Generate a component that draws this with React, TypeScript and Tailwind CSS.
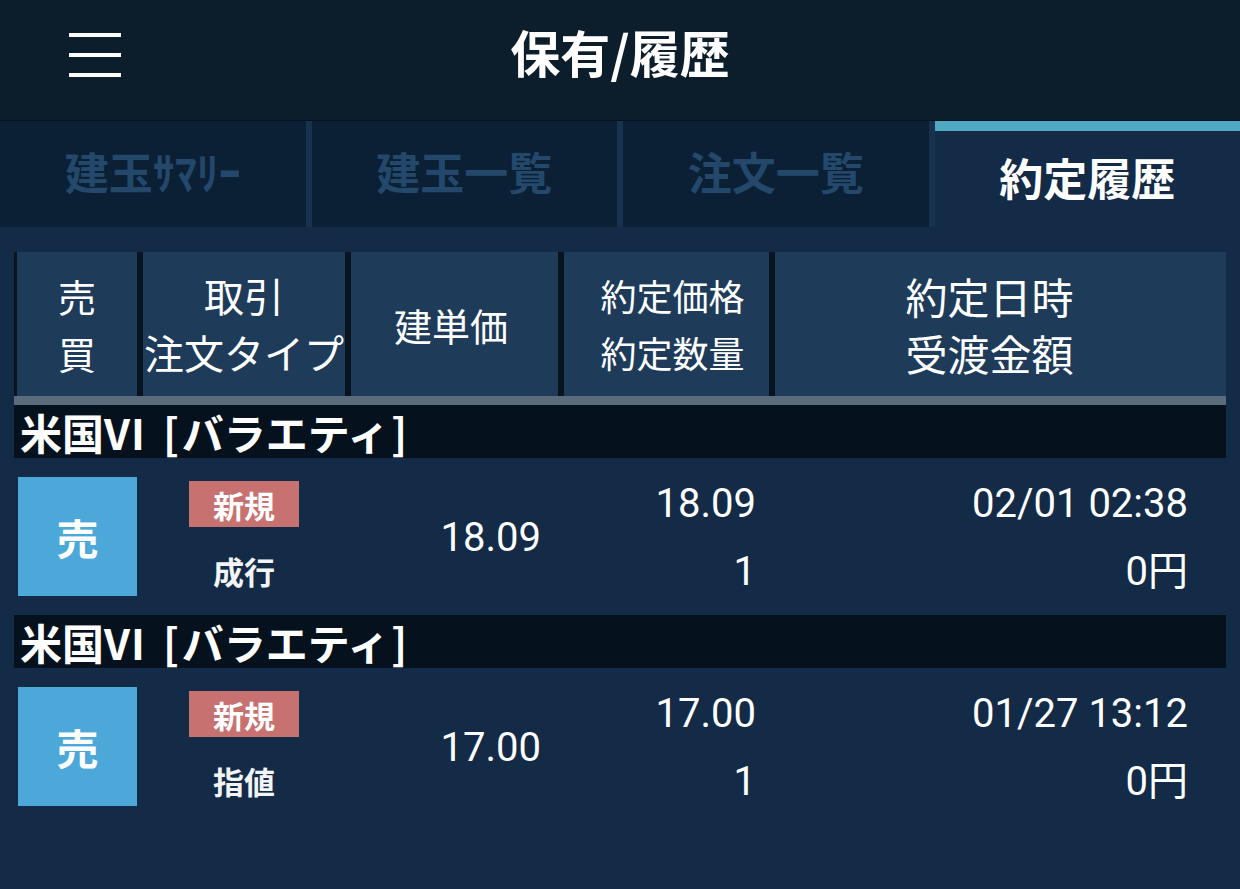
import React from "react";

const CJK = "font-['Noto_Sans_CJK_JP',sans-serif]";
const NUM = "font-['Roboto','Noto_Sans_CJK_JP',sans-serif]";

function Tab({ label, active }: { label: string; active?: boolean }) {
  if (active) {
    return (
      <div className="flex-1 flex flex-col bg-[#132b46]">
        <div className="h-[10px] bg-[#4fa9c2]" />
        <div className="flex-1 flex items-center justify-center pb-[4px] text-[44px] font-bold text-white leading-none">
          {label}
        </div>
      </div>
    );
  }
  return (
    <div className="flex-1 flex items-center justify-center pb-[6px] bg-[#0b2034] text-[44px] font-bold text-[#23486c] leading-none">
      {label}
    </div>
  );
}

function HeadCell({ lines, w, size, pad }: { lines: string[]; w: string; size: string; pad?: string }) {
  return (
    <div className={`${w} ${pad ?? ""} bg-[#1e3c5a] flex flex-col items-center justify-center text-white font-normal leading-[57px] ${size}`}>
      {lines.map((l) => (
        <div key={l} className="whitespace-nowrap">{l}</div>
      ))}
    </div>
  );
}

type Row = { kind: string; order: string; unit: string; price: string; qty: string; date: string; amt: string };

function GroupBar() {
  return (
    <div className="h-[53px] bg-[#05121e] flex items-center pl-[6px] text-white font-bold text-[42px] leading-none whitespace-nowrap">
      米国<span className="tracking-[1px]">VI</span>
      <span className="pl-[17px] pr-[3px]">[</span>バラエティ<span className="pl-[2px]">]</span>
    </div>
  );
}

function DataRow({ r }: { r: Row }) {
  return (
    <div className="h-[157px] flex">
      <div className="w-[129px] pl-[4px] pt-[19px]">
        <div className="w-[119px] h-[119px] bg-[#4ba8d9] flex items-center justify-center text-white font-bold text-[42px] leading-none">
          売
        </div>
      </div>
      <div className="w-[202px] flex flex-col items-center pt-[23px]">
        <div className="w-[110px] h-[46px] bg-[#c87171] flex items-center justify-center text-white font-bold text-[31px] leading-none">
          {r.kind}
        </div>
        <div className="mt-[24px] text-[31px] font-bold text-[#f2f4f6] leading-[40px]">{r.order}</div>
      </div>
      <div className={`w-[212px] flex items-center justify-end pr-[16px] pt-[2px] text-white text-[40px] leading-none ${NUM}`}>
        {r.unit}
      </div>
      <div className={`w-[212px] flex flex-col items-end pr-[13px] pt-[12px] text-white text-[40px] leading-[68px] ${NUM}`}>
        <div>{r.price}</div>
        <div>{r.qty}</div>
      </div>
      <div className={`flex-1 flex flex-col items-end pr-[38px] pt-[12px] text-white text-[40px] leading-[68px] ${NUM}`}>
        <div className="whitespace-nowrap">{r.date}</div>
        <div>{r.amt}</div>
      </div>
    </div>
  );
}

export default function App() {
  const rows: Row[] = [
    { kind: "新規", order: "成行", unit: "18.09", price: "18.09", qty: "1", date: "02/01 02:38", amt: "0円" },
    { kind: "新規", order: "指値", unit: "17.00", price: "17.00", qty: "1", date: "01/27 13:12", amt: "0円" },
  ];
  return (
    <div className={`w-[1240px] h-[889px] bg-[#132b46] overflow-hidden ${CJK}`}>
      <div className="h-[121px] bg-[#0c1d2c] border-b border-[#08131e] grid grid-cols-[1fr_auto_1fr] items-center pb-[10px]">
        <div className="pl-[69px] flex flex-col gap-[16px]">
          <div className="w-[52px] h-[4px] bg-white" />
          <div className="w-[52px] h-[4px] bg-white" />
          <div className="w-[52px] h-[4px] bg-white" />
        </div>
        <div className="text-white font-bold text-[50px] leading-none mb-[8px]">保有/履歴</div>
        <div />
      </div>
      <div className="h-[106px] flex gap-[6px] bg-[#17314f]">
        <Tab label="建玉ｻﾏﾘｰ" />
        <Tab label="建玉一覧" />
        <Tab label="注文一覧" />
        <Tab label="約定履歴" active />
      </div>
      <div className="ml-[14px] w-[1212px] mt-[25px]">
        <div className="h-[144px] flex gap-[6px] pl-[3px] bg-[#08141f]">
          <HeadCell lines={["売", "買"]} w="w-[120px]" size="text-[38px]" />
          <HeadCell lines={["取引", "注文タイプ"]} w="w-[202px]" size="text-[40px]" />
          <HeadCell lines={["建単価"]} w="w-[207px]" size="text-[38px]" pad="pr-[7px]" />
          <HeadCell lines={["約定価格", "約定数量"]} w="w-[205px]" size="text-[36px]" pad="pl-[12px]" />
          <HeadCell lines={["約定日時", "受渡金額"]} w="flex-1" size="text-[42px]" pad="pr-[22px]" />
        </div>
        <div className="h-[9px] bg-[#5a6c7c]" />
        {rows.map((r, i) => (
          <div key={i}>
            <GroupBar />
            <DataRow r={r} />
          </div>
        ))}
      </div>
    </div>
  );
}
